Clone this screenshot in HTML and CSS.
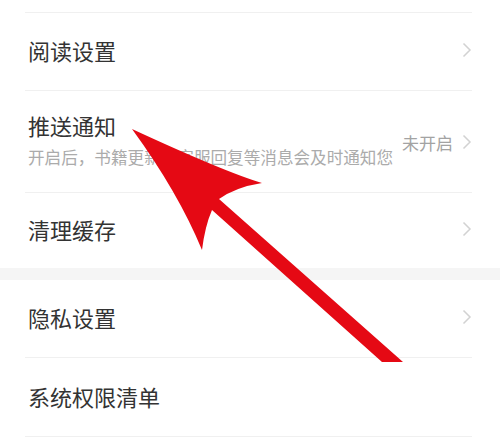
FILE: index.html
```html
<!DOCTYPE html>
<html lang="zh-CN">
<head>
<meta charset="utf-8">
<title>设置</title>
<link rel="stylesheet" href="styles.css">
</head>
<body>
<div class="page">
  <section class="group">
    <div class="row row-prev"></div>
    <div class="row">
      <span class="title">阅读设置</span>
      <svg class="chev" viewBox="0 0 10 16" width="10" height="16"><polyline points="1.5,1.5 8,8 1.5,14.5"/></svg>
    </div>
    <div class="row row-tall">
      <div class="texts">
        <span class="title">推送通知</span>
        <span class="sub">开启后，书籍更新、客服回复等消息会及时通知您</span>
      </div>
      <div class="right">
        <span class="status">未开启</span>
        <svg class="chev" viewBox="0 0 10 16" width="10" height="16"><polyline points="1.5,1.5 8,8 1.5,14.5"/></svg>
      </div>
    </div>
    <div class="row row-last">
      <span class="title">清理缓存</span>
      <svg class="chev" viewBox="0 0 10 16" width="10" height="16"><polyline points="1.5,1.5 8,8 1.5,14.5"/></svg>
    </div>
  </section>
  <div class="band"></div>
  <section class="group">
    <div class="row">
      <span class="title">隐私设置</span>
      <svg class="chev" viewBox="0 0 10 16" width="10" height="16"><polyline points="1.5,1.5 8,8 1.5,14.5"/></svg>
    </div>
    <div class="row row-end">
      <span class="title">系统权限清单</span>
    </div>
  </section>
  <svg class="arrow" viewBox="0 0 500 438" width="500" height="438">
    <path d="M132,129 Q225,172 262,183 Q236,187 219,199 L403,362 L382,362 L212,210 Q205,226 202,250 Q178,192 132,129 Z"/>
  </svg>
</div>
</body>
</html>
```

FILE: styles.css
```css
html, body {
  margin: 0;
  padding: 0;
  background: #ffffff;
}
body {
  font-family: "Noto Sans CJK SC", "Noto Sans", sans-serif;
  color: #333333;
  width: 500px;
  height: 438px;
  overflow: hidden;
}
.page {
  position: relative;
  width: 500px;
  height: 438px;
}
.group {
  padding: 0 28px 0 25px;
  background: #fff;
}
.row {
  display: flex;
  align-items: center;
  justify-content: space-between;
  box-sizing: border-box;
  height: 78px;
  border-bottom: 1px solid #f0f0f0;
  padding: 0 0 3px 3px;
}
.row-prev {
  height: 13px;
  padding: 0;
}
.row-tall {
  height: 102px;
}
.row-last {
  height: 75px;
  border-bottom: none;
}
.row-end {
  height: 79px;
}
.title {
  font-size: 22px;
  line-height: 26px;
}
.texts {
  display: flex;
  flex-direction: column;
}
.sub {
  font-size: 16.6px;
  line-height: 22px;
  margin-top: 8px;
  color: #ababab;
}
.right {
  display: flex;
  align-items: center;
  gap: 9px;
  padding-top: 4px;
}
.status {
  font-size: 17px;
  color: #a3a3a3;
}
.chev {
  display: block;
  fill: none;
  stroke: #d2d2d2;
  stroke-width: 1.5;
  flex: none;
}
.band {
  height: 12px;
  background: #f5f5f5;
}
.arrow {
  position: absolute;
  left: 0;
  top: 0;
  pointer-events: none;
}
.arrow path {
  fill: #e50914;
}
```
